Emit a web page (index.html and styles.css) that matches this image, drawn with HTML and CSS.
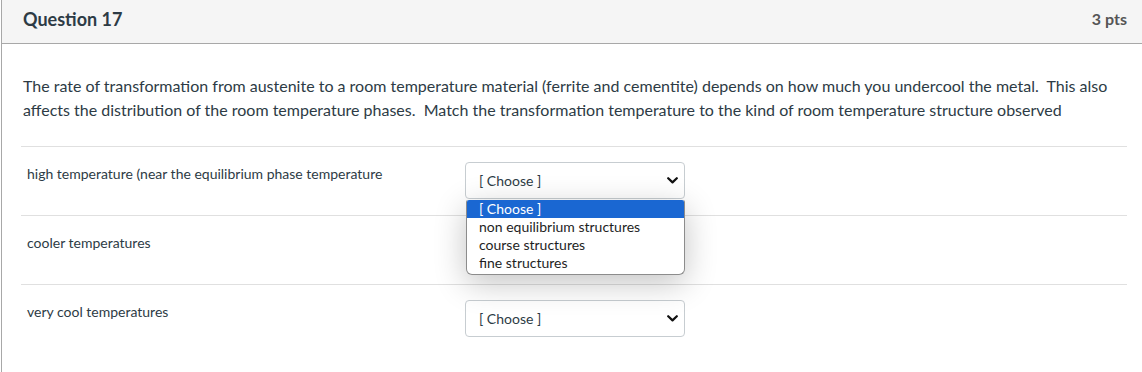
FILE: index.html
```html
<!DOCTYPE html>
<html lang="en">
<head>
  <meta charset="UTF-8">
  <title>Question 17</title>
  <link rel="stylesheet" href="styles.css">
</head>
<body>
  <div class="question">
    <div class="header">
      <span class="name">Question 17</span>
      <span class="points">3 pts</span>
    </div>
    <div class="content">
      <p class="text">The rate of transformation from austenite to a room temperature material (ferrite and cementite) depends on how much you undercool the metal.&nbsp; This also affects the distribution of the room temperature phases.&nbsp; Match the transformation temperature to the kind of room temperature structure observed</p>

      <div class="answer">
        <div class="label">high temperature (near the equilibrium phase temperature</div>
        <div class="select-wrap">
          <div class="select">
            <span>[ Choose ]</span>
            <svg class="chevron" width="11" height="7" viewBox="0 0 11 7"><path d="M1.2 1.2 L5.5 5.4 L9.8 1.2" fill="none" stroke="#111" stroke-width="2.2" stroke-linecap="round" stroke-linejoin="round"/></svg>
          </div>
          <div class="dropdown">
            <div class="option selected">[ Choose ]</div>
            <div class="option">non equilibrium structures</div>
            <div class="option">course structures</div>
            <div class="option">fine structures</div>
          </div>
        </div>
      </div>

      <div class="answer">
        <div class="label">cooler temperatures</div>
        <div class="select-wrap">
          <!-- covered by the open list above -->
          <div class="select covered">
            <span>[ Choose ]</span>
            <svg class="chevron" width="11" height="7" viewBox="0 0 11 7"><path d="M1.2 1.2 L5.5 5.4 L9.8 1.2" fill="none" stroke="#111" stroke-width="2.2" stroke-linecap="round" stroke-linejoin="round"/></svg>
          </div>
        </div>
      </div>

      <div class="answer">
        <div class="label">very cool temperatures</div>
        <div class="select-wrap">
          <div class="select">
            <span>[ Choose ]</span>
            <svg class="chevron" width="11" height="7" viewBox="0 0 11 7"><path d="M1.2 1.2 L5.5 5.4 L9.8 1.2" fill="none" stroke="#111" stroke-width="2.2" stroke-linecap="round" stroke-linejoin="round"/></svg>
          </div>
        </div>
      </div>
    </div>
  </div>
</body>
</html>
```

FILE: styles.css
```css
body {
  margin: 0;
  font-family: Lato, "Open Sans", sans-serif;
  color: #2d3b45;
  background: #fff;
  overflow: hidden;
}
.question {
  margin-left: 1px;
  border-left: 1px solid #a8a8a8;
  height: 372px;
}
.header {
  display: flex;
  justify-content: space-between;
  align-items: center;
  height: 43px;
  padding: 0 15px 0 21px;
  background: #f5f5f5;
  border-bottom: 1px solid #a8a8a8;
}
.name {
  font-size: 18px;
  font-weight: bold;
  color: #2d3b45;
  margin-top: -5px;
}
.points {
  font-size: 16px;
  font-weight: bold;
  color: #555;
  margin-top: -6px;
}
.content {
  padding: 0 15px 0 19px;
}
.text {
  margin: 0;
  padding: 30px 2px 24px 2px;
  font-size: 16px;
  line-height: 24px;
  border-bottom: 1px solid #e0e0e0;
}
.answer {
  display: flex;
  padding: 15px 0 16px 6px;
  border-bottom: 1px solid #e0e0e0;
}
.answer:last-child {
  border-bottom: none;
}
.label {
  width: 438px;
  font-size: 14px;
  line-height: 20px;
  margin-top: 2px;
}
.select-wrap {
  position: relative;
}
.select {
  box-sizing: border-box;
  display: flex;
  justify-content: space-between;
  align-items: center;
  width: 220px;
  height: 37px;
  padding: 0 6px 0 13px;
  font-size: 14px;
  background: #fff;
  border: 1px solid #c7cdd1;
  border-radius: 4px;
}
.select.covered {
  visibility: hidden;
}
.dropdown {
  position: absolute;
  top: 38px;
  left: 1px;
  z-index: 2;
  box-sizing: border-box;
  width: 219px;
  padding-bottom: 2px;
  background: #fff;
  border: 1px solid #8c8c8c;
  border-top: none;
  border-radius: 2px 2px 6px 6px;
  box-shadow: 0 8px 32px rgba(0, 0, 0, 0.24);
  font-size: 14px;
}
.option {
  height: 18px;
  line-height: 18px;
  padding-left: 12px;
  color: #1e1e1e;
}
.option.selected {
  background: #1a67d2;
  color: #fff;
  border-radius: 2px 2px 0 0;
}
```
